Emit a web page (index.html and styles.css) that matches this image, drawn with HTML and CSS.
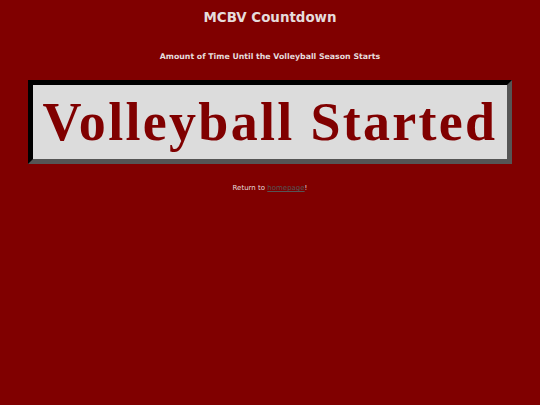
FILE: index.html
```html
<!DOCTYPE html>
<html>
<head>
<meta charset="utf-8">
<title>MCBV Countdown</title>
<link rel="stylesheet" href="styles.css">
</head>
<body>
<h1 class="title">MCBV Countdown</h1>
<h2 class="subtitle">Amount of Time Until the Volleyball Season Starts</h2>
<div class="counter">Volleyball Started</div>
<p class="back">Return to <a href="#">homepage</a>!</p>
</body>
</html>
```
FILE: styles.css
```css
html, body {
  margin: 0;
  padding: 0;
  background: #800000;
}
body {
  font-family: "DejaVu Sans", Verdana, sans-serif;
  color: #e6dcdc;
  text-align: center;
}
.title {
  margin: 0;
  padding-top: 10px;
  font-size: 13.4px;
  line-height: 16px;
  font-weight: bold;
}
.subtitle {
  margin: 26px 0 0;
  font-size: 7.8px;
  line-height: 10px;
  font-weight: bold;
}
.counter {
  margin: 18px 28px 0;
  height: 74px;
  background: #dcdcdc;
  border-style: solid;
  border-width: 5px;
  border-color: #000 #555 #555 #000;
  color: #800000;
  font-family: "Liberation Serif", "Times New Roman", serif;
  font-weight: bold;
  font-size: 54px;
  line-height: 74px;
  letter-spacing: 2.3px;
}
.back {
  margin: 19px 0 0;
  font-size: 7px;
  line-height: 10px;
}
.back a {
  color: #555;
}
```
